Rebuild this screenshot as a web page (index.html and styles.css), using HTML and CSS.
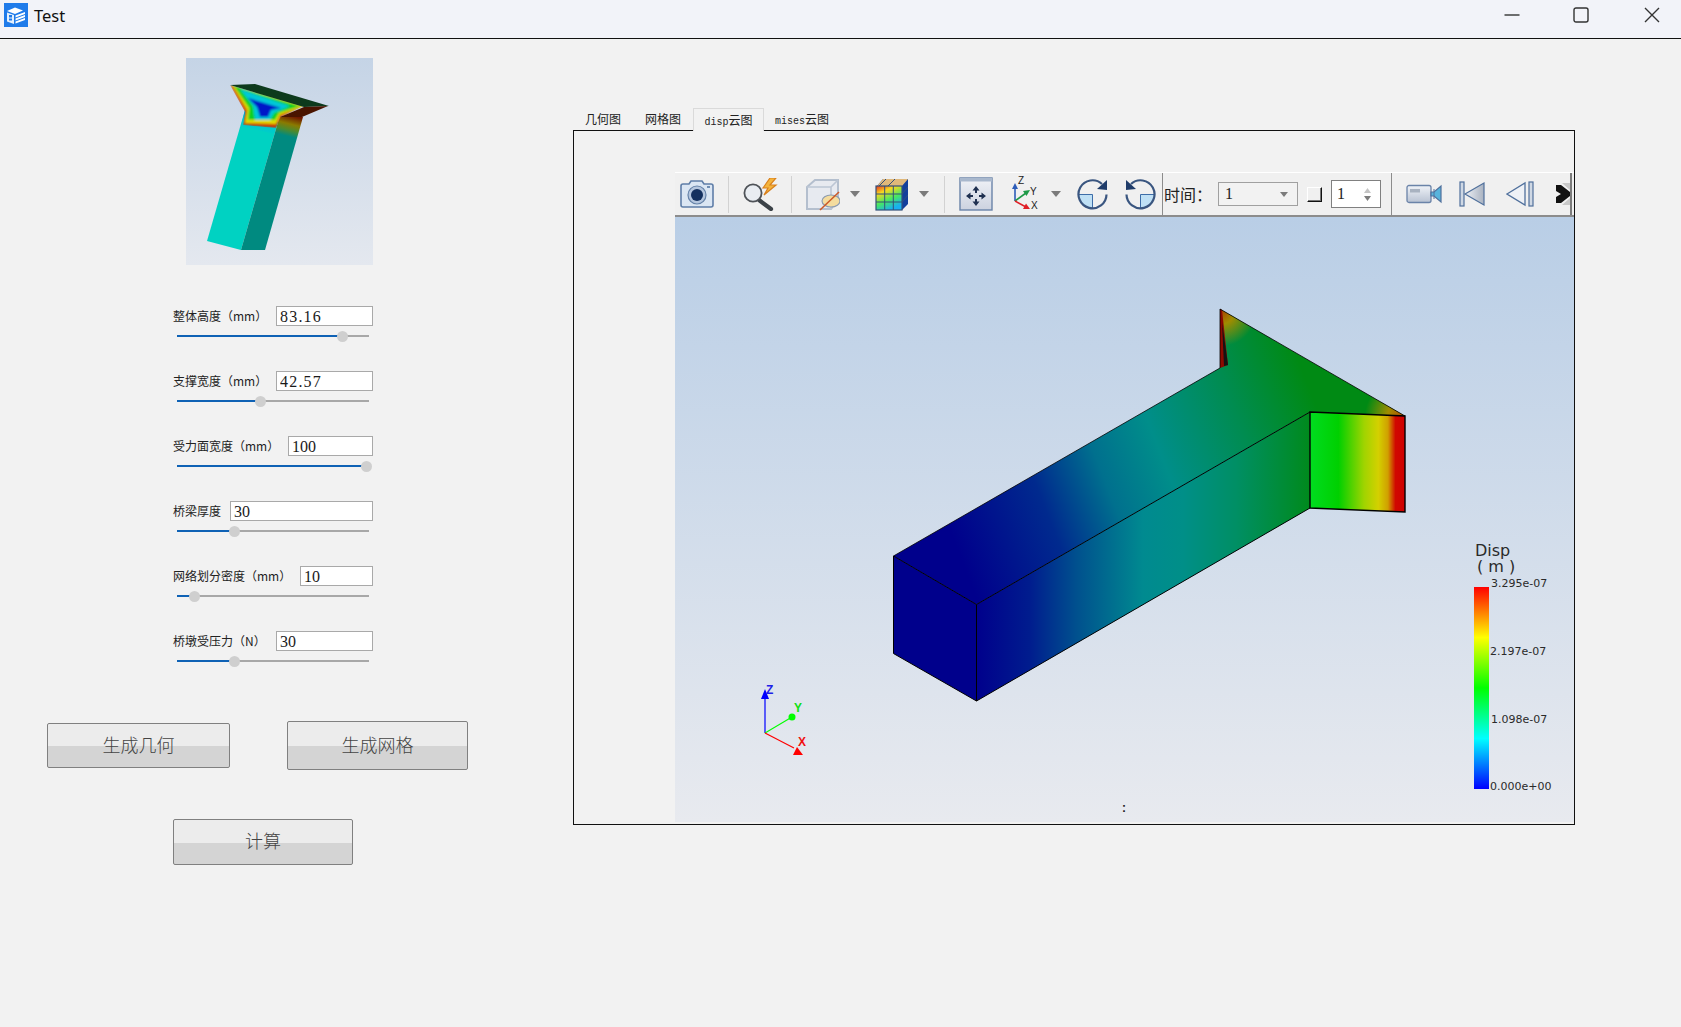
FILE: index.html
```html
<!DOCTYPE html>
<html lang="zh-CN">
<head>
<meta charset="utf-8">
<title>Test</title>
<link rel="stylesheet" href="styles.css">
</head>
<body>
<div class="app">
  <header class="titlebar">
    <svg class="app-icon" viewBox="0 0 24 24">
      <rect width="24" height="24" fill="#1f7bea"/>
      <path d="M3 8 L11 4.5 L19 7.5 L11 11 Z" fill="#fff"/>
      <path d="M3 9.5 L10 12 V21 L3 18.5 Z" fill="#e6f0fc"/>
      <path d="M5 12 h3 v2.5 h-3z M5 15.5 h3 v2 h-3z" fill="#1f7bea"/>
      <path d="M11.5 12.5 L21 9 V11 L11.5 14.5 Z M11.5 15.5 L21 12 V14 L11.5 17.5 Z M11.5 18.5 L21 15 V17 L11.5 20.5 Z" fill="#fff"/>
    </svg>
    <span class="app-title">Test</span>
    <div class="win-controls">
      <svg class="win-btn" viewBox="0 0 16 16"><path d="M0.5 8 H15.5" class="win-stroke"/></svg>
      <svg class="win-btn" viewBox="0 0 16 16"><rect x="1" y="1" width="14" height="14" rx="2" class="win-stroke"/></svg>
      <svg class="win-btn win-close" viewBox="0 0 16 16"><path d="M1 1 L15 15 M15 1 L1 15" class="win-stroke"/></svg>
    </div>
  </header>

  <main class="main">
    <section class="side">
      <svg class="thumb" viewBox="186 58 187 207">
        <defs>
          <linearGradient id="thumbBg" x1="0" y1="0" x2="0" y2="1"><stop offset="0" stop-color="#c5d4e6"/><stop offset="1" stop-color="#e4e8ef"/></linearGradient>
          <linearGradient id="thumbLeft" gradientUnits="userSpaceOnUse" x1="262" y1="112" x2="258" y2="134"><stop offset="0" stop-color="#0a7ae0"/><stop offset=".5" stop-color="#00c4d4"/><stop offset="1" stop-color="#00d2c2"/></linearGradient>
          <linearGradient id="thumbRight" gradientUnits="userSpaceOnUse" x1="292" y1="116" x2="287" y2="136"><stop offset="0" stop-color="#701800"/><stop offset=".4" stop-color="#8a7a00"/><stop offset=".7" stop-color="#4a8a30"/><stop offset="1" stop-color="#008a80"/></linearGradient>
          <filter id="soft" x="-10%" y="-10%" width="120%" height="120%"><feGaussianBlur stdDeviation=".9"/></filter>
          <clipPath id="thumbTop"><polygon points="230,85 245,112 243,125 276,128 281,117 304,106"/></clipPath>
        </defs>
        <rect x="186" y="58" width="187" height="207" fill="url(#thumbBg)"/>
        <polygon points="207,241 241,250 278,122 245,110" fill="#00d2c2"/>
        <polygon points="241,250 265,250 303,117 280,117 278,122" fill="url(#thumbRight)"/>
        <polygon points="245,110 278,122 274,134 241,126" fill="url(#thumbLeft)"/>
        <g clip-path="url(#thumbTop)">
          <g filter="url(#soft)">
            <polygon points="230,85 245,112 243,125 276,128 281,117 304,106" fill="#d03000"/>
            <polygon points="232,85 247,110 245,123 276,124 280,115 304,106" fill="#e0dc00"/>
            <polygon points="234,86 249,108 248,120 275,120 279,113 300,106" fill="#10d020"/>
            <polygon points="240,89 253,106 255,120 270,120 274,113 290,106" fill="#00c8d8"/>
            <polygon points="248,98 257,107 260,117 268,117 271,110 281,108" fill="#0018c8"/>
          </g>
        </g>
        <polygon points="230,85 255,84 329,106 304,107" fill="#0d3a1c"/>
        <polygon points="280,117 304,107 328,106 302,117" fill="#4a1400"/>
      </svg>

      <div class="params">
        <div class="param">
          <div class="param-row"><label class="param-label">整体高度（mm）</label><input class="param-input w97 wide" value="83.16"></div>
          <div class="slider"><div class="slider-fill" style="width:85.9%"><span class="slider-knob"></span></div></div>
        </div>
        <div class="param">
          <div class="param-row"><label class="param-label">支撑宽度（mm）</label><input class="param-input w97 wide" value="42.57"></div>
          <div class="slider"><div class="slider-fill" style="width:43.2%"><span class="slider-knob"></span></div></div>
        </div>
        <div class="param">
          <div class="param-row"><label class="param-label">受力面宽度（mm）</label><input class="param-input w85" value="100"></div>
          <div class="slider"><div class="slider-fill" style="width:98.4%"><span class="slider-knob"></span></div></div>
        </div>
        <div class="param">
          <div class="param-row"><label class="param-label">桥梁厚度</label><input class="param-input w143" value="30"></div>
          <div class="slider"><div class="slider-fill" style="width:29.7%"><span class="slider-knob"></span></div></div>
        </div>
        <div class="param">
          <div class="param-row"><label class="param-label">网络划分密度（mm）</label><input class="param-input w73" value="10"></div>
          <div class="slider"><div class="slider-fill" style="width:8.9%"><span class="slider-knob"></span></div></div>
        </div>
        <div class="param">
          <div class="param-row"><label class="param-label">桥墩受压力（N）</label><input class="param-input w97" value="30"></div>
          <div class="slider"><div class="slider-fill" style="width:29.7%"><span class="slider-knob"></span></div></div>
        </div>
      </div>

      <div class="actions">
        <button class="btn btn-geo">生成几何</button>
        <button class="btn btn-mesh">生成网格</button>
      </div>
      <button class="btn btn-calc">计算</button>
    </section>

    <section class="view">
      <nav class="tabs">
        <span class="tab tab-a">几何图</span>
        <span class="tab tab-a">网格图</span>
        <span class="tab tab-b tab-active"><span class="tab-latin">disp</span>云图</span>
        <span class="tab tab-c"><span class="tab-latin">mises</span>云图</span>
      </nav>
      <div class="panel">
        <div class="toolbar">
          <svg class="ic ml5" width="34" height="30" viewBox="0 0 34 30">
            <path d="M3 5 H9 L11 2 H22 L24 5 H31 Q33 5 33 7 V26 Q33 28 31 28 H3 Q1 28 1 26 V7 Q1 5 3 5Z" fill="#dbe6f3" stroke="#5f7ea8" stroke-width="1.6"/>
            <circle cx="17" cy="16" r="9" fill="#b5c6de" stroke="#6582a8" stroke-width="1.2"/>
            <circle cx="17" cy="16" r="6" fill="#14305f"/>
            <rect x="27" y="7" width="3" height="2" fill="#6f8db3"/>
          </svg>
          <span class="sep ml14"></span>
          <svg class="ic ml14" width="35" height="33" viewBox="0 0 35 33">
            <path d="M16 22 L28 31" stroke="#3c4248" stroke-width="4.2" stroke-linecap="round"/>
            <circle cx="10" cy="15" r="8.6" fill="#e9edf2" stroke="#4f5358" stroke-width="1.8"/>
            <path d="M27 0 L20 10 H25 L21 17 L33 7 H27 L33 0 Z" fill="#f4b43c" stroke="#d9801c" stroke-width="1.2"/>
          </svg>
          <span class="sep ml13"></span>
          <svg class="ic ml14" width="34" height="33" viewBox="0 0 34 33">
            <path d="M1 9 L9 2 H32 V22 L25 31 H1 Z" fill="#e7eaf0" stroke="#b4bfce" stroke-width="2"/>
            <path d="M1 9 H25 V31 M25 9 L32 2" fill="none" stroke="#bcc6d4" stroke-width="1.6"/>
            <ellipse cx="25" cy="23" rx="9" ry="6" fill="#f4dc9e" stroke="#8b9bb0" stroke-width="1.2"/>
            <path d="M14 32 L33 14" stroke="#cc5a28" stroke-width="1.6"/>
          </svg>
          <svg class="ic ml10" width="10" height="6" viewBox="0 0 10 6"><path d="M0 0 H10 L5 6Z" fill="#7b7b7b"/></svg>
          <svg class="ic ml15" width="33" height="33" viewBox="0 0 33 33">
            <defs>
              <linearGradient id="rubik" x1="0" y1="0" x2=".5" y2="1"><stop offset="0" stop-color="#e8321f"/><stop offset=".3" stop-color="#f8d820"/><stop offset=".65" stop-color="#48e860"/><stop offset="1" stop-color="#18b0f0"/></linearGradient>
            </defs>
            <polygon points="2,8 8,1 33,1 33,26 27,32 27,8" fill="#123f9c"/>
            <polygon points="2,8 8,1 33,1 27,8" fill="#e0b87a"/>
            <rect x="1" y="8" width="26" height="24" fill="url(#rubik)" stroke="#33507a" stroke-width="1.2"/>
            <path d="M9.7 8 V32 M18.3 8 V32 M1 16 H27 M1 24 H27 M11 1 L4 8 M20 1 L13 8 M27 16 L33 9 M27 24 L33 17" stroke="#33507a" stroke-width="1" fill="none"/>
          </svg>
          <svg class="ic ml11" width="10" height="6" viewBox="0 0 10 6"><path d="M0 0 H10 L5 6Z" fill="#7b7b7b"/></svg>
          <span class="sep ml15"></span>
          <svg class="ic ml14" width="34" height="34" viewBox="0 0 34 34">
            <defs><linearGradient id="panBg" x1="0" y1="0" x2="0" y2="1"><stop offset="0" stop-color="#f0f2f7"/><stop offset="1" stop-color="#ccd2df"/></linearGradient></defs>
            <rect x="1" y="1" width="32" height="32" fill="url(#panBg)" stroke="#6a83a8" stroke-width="1.4"/>
            <rect x="1" y="1" width="32" height="3.5" fill="#a9b8cd"/>
            <path d="M17 9 L13.5 13.5 H16 V16 H18 V13.5 H20.5 Z M17 29 L13.5 24.5 H16 V22 H18 V24.5 H20.5 Z M7 19 L11.5 15.5 V18 H14 V20 H11.5 V22.5 Z M27 19 L22.5 15.5 V18 H20 V20 H22.5 V22.5 Z" fill="#1f3050"/>
          </svg>
          <svg class="ic ml18" width="30" height="36" viewBox="0 0 30 36">
            <path d="M4 25 V10" stroke="#2d5cb8" stroke-width="1.6"/><path d="M4 7 L1 13 H7Z" fill="#2d5cb8"/>
            <path d="M4 25 L15 17" stroke="#1f9a48" stroke-width="1.6"/><path d="M19 14 L12 15 L15.5 20Z" fill="#1f9a48"/>
            <path d="M4 25 L15 31" stroke="#e02028" stroke-width="1.6"/><path d="M19 33 L12 33 L15 27.5Z" fill="#e02028"/>
            <text x="7" y="8" class="axis-ic">Z</text><text x="19" y="19" class="axis-ic">Y</text><text x="20" y="33" class="axis-ic">X</text>
          </svg>
          <svg class="ic ml10" width="10" height="6" viewBox="0 0 10 6"><path d="M0 0 H10 L5 6Z" fill="#7b7b7b"/></svg>
          <svg class="ic ml16" width="31" height="31" viewBox="0 0 31 31">
            <path d="M15.5 15.5 H1.5 A14 14 0 0 0 15.5 29.5 Z" fill="#bfe0f5"/>
            <path d="M1.5 15.5 H15.5 V29.5" fill="none" stroke="#3d6da8" stroke-width="1"/>
            <path d="M25 5 A14 14 0 1 0 29.5 15.5" fill="none" stroke="#3a5680" stroke-width="2.2"/>
            <path d="M30 1 L30 11 L20 10 Z" fill="#1f3c6a"/>
          </svg>
          <svg class="ic ml17" width="31" height="31" viewBox="0 0 31 31">
            <path d="M15.5 15.5 H29.5 A14 14 0 0 1 15.5 29.5 Z" fill="#bfe0f5"/>
            <path d="M29.5 15.5 H15.5 V29.5" fill="none" stroke="#3d6da8" stroke-width="1"/>
            <path d="M6 5 A14 14 0 1 1 1.5 15.5" fill="none" stroke="#3a5680" stroke-width="2.2"/>
            <path d="M1 1 L1 11 L11 10 Z" fill="#1f3c6a"/>
          </svg>
          <span class="divider ml6"></span>
          <span class="tool-label">时间：</span>
          <div class="combo"><span class="ctrl-value">1</span><svg width="8" height="5" viewBox="0 0 10 6"><path d="M0 0 H10 L5 6Z" fill="#7b7b7b"/></svg></div>
          <span class="check"></span>
          <div class="spin"><span class="ctrl-value">1</span>
            <span class="spin-arrows">
              <svg width="7" height="5" viewBox="0 0 7 5"><path d="M0 5 H7 L3.5 0Z" fill="#c4c4c4"/></svg>
              <svg width="7" height="5" viewBox="0 0 7 5"><path d="M0 0 H7 L3.5 5Z" fill="#7c7c7c"/></svg>
            </span>
          </div>
          <span class="divider ml10"></span>
          <div class="player">
            <svg class="ic pl-cam" width="36" height="20" viewBox="0 0 36 20">
              <defs><linearGradient id="camBody" x1="0" y1="0" x2="0" y2="1"><stop offset="0" stop-color="#f0f3f8"/><stop offset="1" stop-color="#b8c2d2"/></linearGradient></defs>
              <rect x="1" y="1.5" width="24" height="17" rx="2" fill="url(#camBody)" stroke="#6a83a8" stroke-width="1.3"/>
              <rect x="4" y="5" width="10" height="3.5" fill="#a8b2c0"/>
              <path d="M25 8 L28 8 L35 2 V18 L28 12 L25 12 Z" fill="#58b4dc" stroke="#50709c" stroke-width="1.2"/>
              <path d="M28 5 V15" stroke="#50709c"/>
            </svg>
            <svg class="ic pl-first" width="26" height="26" viewBox="0 0 26 26">
              <defs><linearGradient id="firstG" x1="0" y1="0" x2="1" y2="0"><stop offset="0" stop-color="#eef1f6"/><stop offset="1" stop-color="#a9b2c0"/></linearGradient></defs>
              <rect x="1" y="1" width="4" height="24" fill="#cfd8e4" stroke="#50709c" stroke-width="1.2"/>
              <path d="M6 13 L25 2 V24 Z" fill="url(#firstG)" stroke="#50709c" stroke-width="1.2"/>
            </svg>
            <svg class="ic pl-prev" width="28" height="26" viewBox="0 0 28 26">
              <path d="M1 13 L19 2 V24 Z" fill="#eef1f6" stroke="#50709c" stroke-width="1.3"/>
              <rect x="23" y="1" width="4" height="24" fill="#cfd8e4" stroke="#50709c" stroke-width="1.2"/>
            </svg>
            <svg class="ic pl-next" width="14" height="22" viewBox="0 0 14 22">
              <path d="M0 0 H6 L14 7 V0 Z M0 22 H6 L14 15 V22 Z" fill="#c8c8c8"/>
              <path d="M0 2 H5 L14 9 V13 L5 20 H0 V14 L5 11 L0 8 Z" fill="#111"/>
            </svg>
          </div>
        </div>

        <svg class="scene" viewBox="675 217 899 605">
          <defs>
            <linearGradient id="sky" x1="0" y1="0" x2="0" y2="1"><stop offset="0" stop-color="#b9cee6"/><stop offset="1" stop-color="#e8eaef"/></linearGradient>
            <linearGradient id="sideFace" gradientUnits="userSpaceOnUse" x1="976" y1="0" x2="1310" y2="0">
              <stop offset="0" stop-color="#00008c"/><stop offset=".16" stop-color="#001c8e"/><stop offset=".3" stop-color="#00508e"/><stop offset=".5" stop-color="#008a90"/><stop offset=".62" stop-color="#008f88"/><stop offset=".78" stop-color="#008f64"/><stop offset="1" stop-color="#008a1c"/>
            </linearGradient>
            <linearGradient id="topFace" gradientUnits="userSpaceOnUse" x1="950" y1="530" x2="1310" y2="390">
              <stop offset="0" stop-color="#00008c"/><stop offset=".25" stop-color="#002a8e"/><stop offset=".42" stop-color="#00708e"/><stop offset=".58" stop-color="#008e8a"/><stop offset=".8" stop-color="#008c50"/><stop offset="1" stop-color="#008a14"/>
            </linearGradient>
            <linearGradient id="flangeFace" gradientUnits="userSpaceOnUse" x1="1310" y1="0" x2="1405" y2="0">
              <stop offset="0" stop-color="#00dc20"/><stop offset=".3" stop-color="#00d000"/><stop offset=".57" stop-color="#a0d400"/><stop offset=".72" stop-color="#d4d000"/><stop offset=".82" stop-color="#d0a000"/><stop offset=".9" stop-color="#d00800"/><stop offset="1" stop-color="#d00000"/>
            </linearGradient>
            <radialGradient id="peakHeat" gradientUnits="userSpaceOnUse" cx="1222" cy="312" r="34"><stop offset="0" stop-color="#a84a00"/><stop offset=".35" stop-color="#a08c00"/><stop offset="1" stop-color="#a08c00" stop-opacity="0"/></radialGradient>
            <radialGradient id="tipHeat" gradientUnits="userSpaceOnUse" cx="1403" cy="416" r="38"><stop offset="0" stop-color="#b05000"/><stop offset=".4" stop-color="#a08c00"/><stop offset="1" stop-color="#a08c00" stop-opacity="0"/></radialGradient>
            <clipPath id="topClip"><polygon points="893.5,556 1220,368 1220,309 1405,416 1310,412 976.5,604.5"/></clipPath>
            <linearGradient id="legendBar" x1="0" y1="0" x2="0" y2="1"><stop offset="0" stop-color="#f00"/><stop offset=".25" stop-color="#ff0"/><stop offset=".5" stop-color="#0f0"/><stop offset=".75" stop-color="#0ff"/><stop offset="1" stop-color="#00f"/></linearGradient>
          </defs>
          <rect x="675" y="217" width="899" height="605" fill="url(#sky)"/>

          <polygon points="893.5,556 1220,368 1220,309 1405,416 1310,412 976.5,604.5" fill="url(#topFace)"/>
          <g clip-path="url(#topClip)">
            <circle cx="1222" cy="312" r="34" fill="url(#peakHeat)"/>
            <circle cx="1403" cy="416" r="38" fill="url(#tipHeat)"/>
          </g>
          <polygon points="1220,309 1222,310 1228,365 1220,368" fill="#8c0a00"/>
          <polygon points="1222,322 1228,365 1224,366" fill="#141414"/>
          <polygon points="976.5,604.5 1310,412 1310,508 976.5,701" fill="url(#sideFace)"/>
          <polygon points="893.5,556 976.5,604.5 976.5,701 893.5,653.5" fill="#00008c"/>
          <polygon points="1310,412 1405,416 1405,512 1310,508" fill="url(#flangeFace)"/>
          <path d="M893.5 556 L976.5 604.5 L1310 412 M976.5 604.5 V701" class="edge"/>
          <path d="M893.5 556 V653.5 L976.5 701 L1310 508" class="edge"/>
          <path d="M893.5 556 L1220 368 V309 L1405 416" class="edge thin"/>
          <path d="M1310 412 L1405 416 V512 L1310 508 Z" class="edge bold"/>

          <g>
            <path d="M765 733 V697" stroke="#00f" stroke-width="1.2"/>
            <path d="M765 689 L761 699 H769Z" fill="#00f"/>
            <path d="M765 733 L792 717" stroke="#0f0" stroke-width="1.2"/>
            <circle cx="792" cy="717" r="3.5" fill="#0f0"/>
            <path d="M765 733 L794 748" stroke="#f00" stroke-width="1.2"/>
            <path d="M803 755 L793 755 L797 747Z" fill="#f00"/>
            <text x="766" y="694" class="axis axis-z">Z</text>
            <text x="794" y="712" class="axis axis-y">Y</text>
            <text x="798" y="746" class="axis axis-x">X</text>
          </g>

          <rect x="1474" y="587" width="15" height="202" fill="url(#legendBar)"/>
          <text x="1475" y="556" class="legend-title">Disp</text>
          <text x="1477" y="572" class="legend-title">( m )</text>
          <text x="1491" y="587" class="legend-tick">3.295e-07</text>
          <text x="1490" y="655" class="legend-tick">2.197e-07</text>
          <text x="1491" y="723" class="legend-tick">1.098e-07</text>
          <text x="1490" y="790" class="legend-tick">0.000e+00</text>
          <text x="1122" y="812" class="colon">:</text>
        </svg>
      </div>
    </section>
  </main>
</div>
</body>
</html>
```

FILE: styles.css
```css
* { box-sizing: border-box; }
html, body { margin: 0; padding: 0; }
body {
  width: 1681px;
  height: 1027px;
  overflow: hidden;
  background: #f2f2f2;
  font-family: "Noto Sans CJK SC", "Noto Sans", sans-serif;
}
.app { display: flex; flex-direction: column; height: 100%; }

/* title bar */
.titlebar {
  display: flex;
  align-items: center;
  height: 39px;
  background: #f2f3f9;
  border-bottom: 1px solid #111;
  padding-left: 4px;
}
.app-icon { width: 24px; height: 24px; margin-top: -8px; }
.app-title { margin-left: 6px; margin-top: -8px; font: 16.5px "Noto Sans", sans-serif; color: #111; }
.win-controls { display: flex; margin-left: auto; margin-right: 21px; gap: 53px; margin-top: -8px; }
.win-btn { width: 16px; height: 16px; }
.win-close { margin-left: 2px; }
.win-stroke { fill: none; stroke: #333; stroke-width: 1.4; }

/* layout */
.main { display: flex; flex: 1; }
.side { width: 573px; flex: none; display: flex; flex-direction: column; align-items: flex-start; }
.thumb { display: block; width: 187px; height: 207px; margin: 19px 0 0 186px; }

/* parameter rows */
.params { display: flex; flex-direction: column; gap: 29px; margin: 41px 0 0 173px; width: 200px; }
.param-row { display: flex; justify-content: space-between; align-items: center; height: 20px; }
.param-label { font-size: 12px; color: #222; white-space: nowrap; padding-bottom: 2px; }
.param-input {
  height: 20px;
  padding: 2px 0 0 3px;
  border: 1px solid #a9a9a9;
  background: #fff;
  font: 16px "Liberation Serif", "Noto Sans CJK SC", serif;
  color: #1a1a1a;
  outline: none;
}
.wide { letter-spacing: 1.2px; }
.w97 { width: 97px; }
.w85 { width: 85px; }
.w143 { width: 143px; }
.w73 { width: 73px; }

.slider { position: relative; height: 2px; width: 192px; margin: 9px 0 5px 4px; background: #a8a8a8; }
.slider-fill { position: relative; height: 2px; background: #0f62b5; }
.slider-knob {
  position: absolute;
  right: -6px;
  top: -4.5px;
  width: 11px;
  height: 11px;
  border-radius: 50%;
  background: #cfcfcf;
}

/* buttons */
.actions { display: flex; align-items: center; gap: 57px; margin: 54px 0 0 47px; height: 49px; }
.btn {
  display: block;
  padding: 0 0 4px;
  border: 1px solid #808080;
  border-radius: 2px;
  background: linear-gradient(#ececec 0, #ececec 52%, #d4d4d4 52%, #d4d4d4 100%);
  font-family: "Noto Sans CJK SC", sans-serif;
  font-size: 18px;
  font-weight: 300;
  color: #444;
}
.btn-geo { width: 183px; height: 45px; }
.btn-mesh { width: 181px; height: 49px; }
.btn-calc { width: 180px; height: 46px; margin: 49px 0 0 173px; }

/* tabs */
.view { display: flex; flex-direction: column; margin-top: 69px; }
.tabs { display: flex; height: 22px; }
.tab {
  display: block;
  height: 22px;
  line-height: 22px;
  text-align: center;
  font-size: 12px;
  color: #222;
}
.tab-a { width: 60px; }
.tab-b { width: 71px; }
.tab-c { width: 76px; }
.tab-active { background: #f2f2f2; border: 1px solid #dadada; border-bottom: none; height: 23px; position: relative; z-index: 1; }
.tab-latin { font-family: "Liberation Mono", monospace; font-size: 10px; }

.panel {
  width: 1002px;
  height: 695px;
  border: 1px solid #111;
  padding: 41px 0 0 101px;
  background: #f2f2f2;
}

/* toolbar */
.toolbar {
  display: flex;
  align-items: center;
  height: 45px;
  border-top: 1px solid #fff;
  border-bottom: 2px solid #8c8c8c;
  background: #f0f0f0;
}
.ic { display: block; flex: none; }
.ml5 { margin-left: 5px; }
.ml6 { margin-left: 6px; }
.ml10 { margin-left: 10px; }
.ml11 { margin-left: 11px; }
.ml13 { margin-left: 13px; }
.ml14 { margin-left: 14px; }
.ml15 { margin-left: 15px; }
.ml16 { margin-left: 16px; }
.ml17 { margin-left: 17px; }
.ml18 { margin-left: 18px; }
.sep { flex: none; width: 1px; height: 37px; background: #d2d2d2; }
.divider { flex: none; width: 1px; height: 100%; background: #8c8c8c; }
.tool-label { flex: none; margin-left: 1px; font-size: 16px; color: #222; white-space: nowrap; }
.combo {
  flex: none;
  display: flex;
  align-items: center;
  justify-content: space-between;
  width: 80px;
  height: 24px;
  margin-left: 6px;
  padding: 0 9px 0 6px;
  border: 1px solid #a0a0a0;
  background: #f2f2f2;
}
.ctrl-value { font: 16px "Liberation Serif", serif; color: #222; }
.check {
  flex: none;
  width: 15px;
  height: 15px;
  margin-left: 9px;
  border-right: 1px solid #111;
  border-bottom: 1px solid #111;
  border-top: 1px solid #fff;
  border-left: 1px solid #fff;
  box-shadow: inset -1px -1px 0 #777;
}
.spin {
  flex: none;
  display: flex;
  align-items: center;
  justify-content: space-between;
  width: 50px;
  height: 28px;
  margin-left: 9px;
  padding: 0 9px 0 5px;
  border: 1px solid #808080;
  background: #fff;
}
.spin-arrows { display: flex; flex-direction: column; gap: 3px; }
.spin-arrows svg { display: block; }
.player {
  flex: 1;
  display: flex;
  align-items: center;
  align-self: stretch;
  margin: 0 2px 0 11px;
  border-right: 2px solid #7c7c7c;
  background: #f0f0f0;
}
.pl-cam { margin-left: 3px; }
.pl-first { margin-left: 17px; }
.pl-prev { margin-left: 21px; }
.pl-next { margin-left: 22px; }

/* 3D scene */
.scene { display: block; width: 899px; height: 605px; }
.edge { fill: none; stroke: #000; stroke-width: 1; }
.edge.thin { stroke-width: .8; }
.edge.bold { stroke-width: 1.4; }
.axis { font: bold 12px "Liberation Sans", sans-serif; }
.axis-z { fill: #2020e8; }
.axis-y { fill: #10e010; }
.axis-x { fill: #f01010; }
.axis-ic { font: 10px "Liberation Sans", sans-serif; fill: #222; }
.legend-title { font: 16px "DejaVu Sans", sans-serif; fill: #2a2a2a; }
.legend-tick { font: 11px "DejaVu Sans", sans-serif; fill: #2a2a2a; }
.colon { font: bold 12px "Liberation Sans", sans-serif; fill: #222; }
```
